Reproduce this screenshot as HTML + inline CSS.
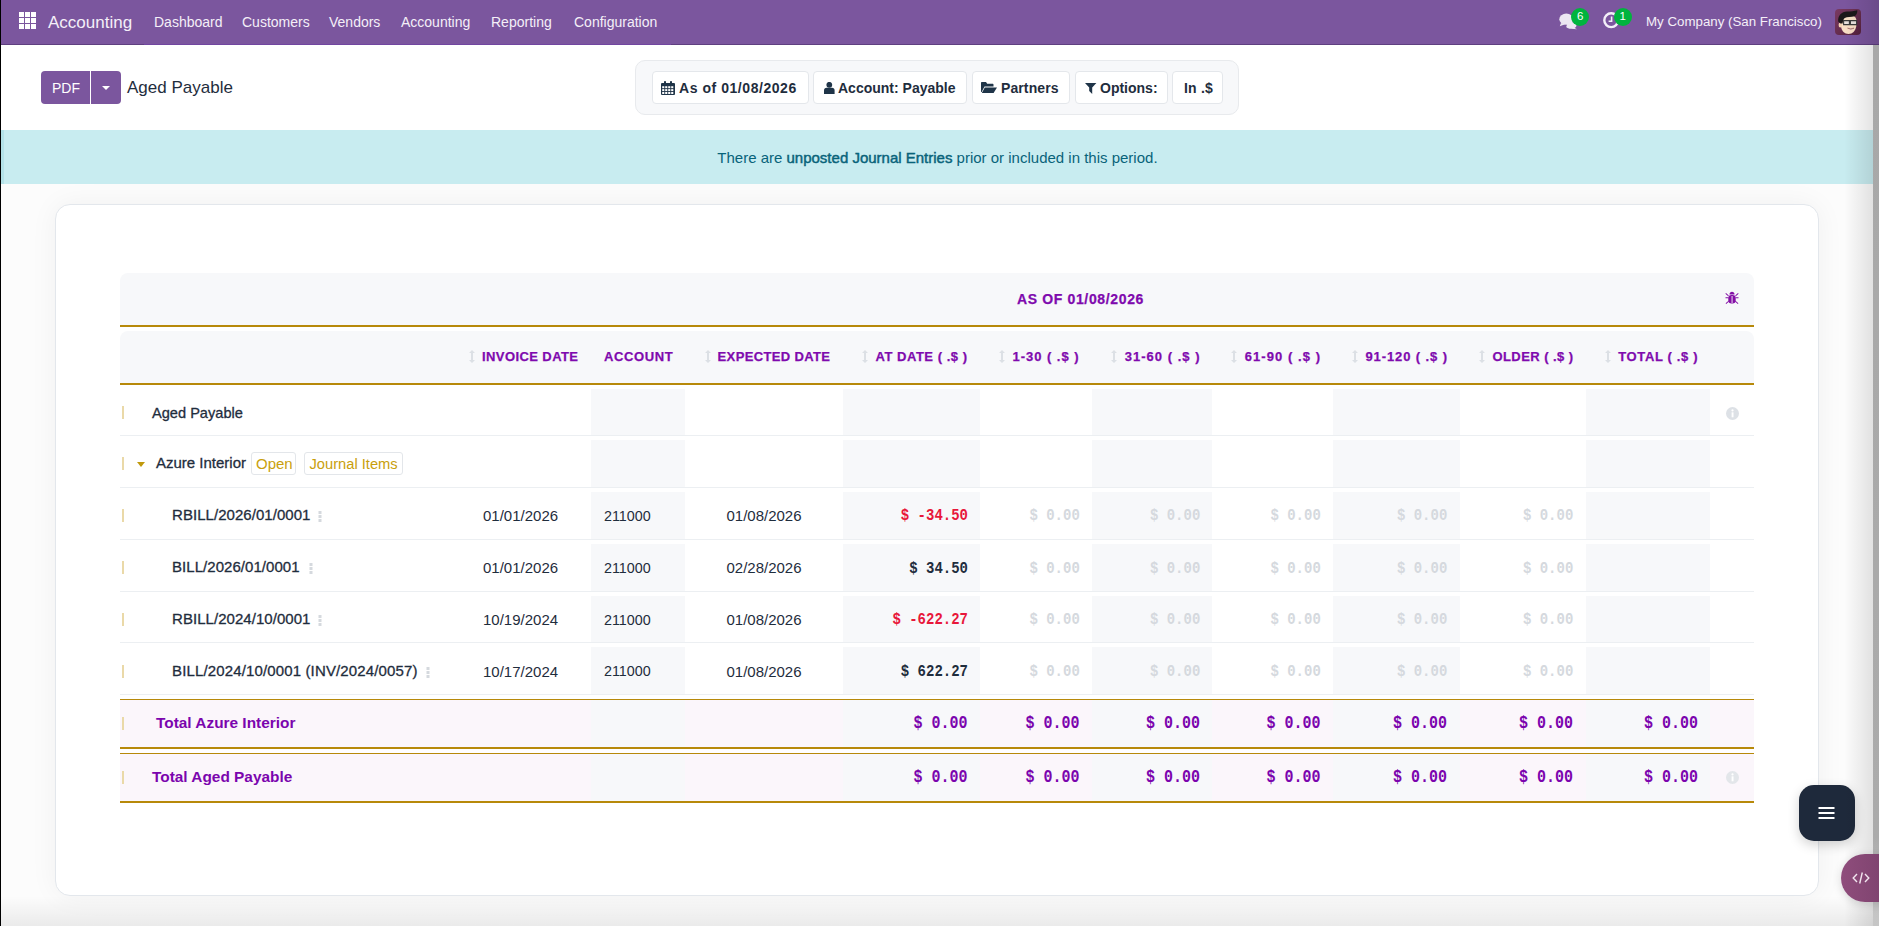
<!DOCTYPE html>
<html><head><meta charset="utf-8">
<style>
*{box-sizing:border-box}
html,body{margin:0;padding:0}
body{width:1879px;height:926px;overflow:hidden;position:relative;background:#fff;font-family:"Liberation Sans",sans-serif;color:#1f2d3d}
.a{position:absolute}
.t{position:absolute;white-space:nowrap;line-height:1}
</style></head><body>

<div class="a" style="left:0px;top:0px;width:1879px;height:45px;background:#7b569e;"></div>
<div class="a" style="left:0px;top:44px;width:1879px;height:1px;background:#5f3f80;"></div>
<div class="a" style="left:144px;top:44px;width:527px;height:1px;background:#7146a0;"></div>
<div class="a" style="left:0px;top:130px;width:1879px;height:54px;background:#c8ecf0;"></div>
<div class="a" style="left:0px;top:184px;width:1879px;height:742px;background:#fcfcfc;"></div>
<div class="a" style="left:1px;top:130px;width:3px;height:54px;background:#b4e2e8;"></div>
<svg class="a" style="left:19px;top:12px" width="18" height="18" viewBox="0 0 18 18"><g fill="#fff"><rect x="0" y="0" width="5" height="5"/><rect x="6" y="0" width="5" height="5"/><rect x="12" y="0" width="5" height="5"/><rect x="0" y="6" width="5" height="5"/><rect x="6" y="6" width="5" height="5"/><rect x="12" y="6" width="5" height="5"/><rect x="0" y="12" width="5" height="5"/><rect x="6" y="12" width="5" height="5"/><rect x="12" y="12" width="5" height="5"/></g></svg>
<div class="t" style="top:14.21px;font-size:17px;color:#f4eff8;font-weight:400;font-family:'Liberation Sans';left:48px;">Accounting</div>
<div class="t" style="top:14.85px;font-size:14px;color:#f4eff8;font-weight:400;font-family:'Liberation Sans';left:154px;">Dashboard</div>
<div class="t" style="top:14.85px;font-size:14px;color:#f4eff8;font-weight:400;font-family:'Liberation Sans';left:242px;">Customers</div>
<div class="t" style="top:14.85px;font-size:14px;color:#f4eff8;font-weight:400;font-family:'Liberation Sans';left:329px;">Vendors</div>
<div class="t" style="top:14.85px;font-size:14px;color:#f4eff8;font-weight:400;font-family:'Liberation Sans';left:401px;">Accounting</div>
<div class="t" style="top:14.85px;font-size:14px;color:#f4eff8;font-weight:400;font-family:'Liberation Sans';left:491px;">Reporting</div>
<div class="t" style="top:14.85px;font-size:14px;color:#f4eff8;font-weight:400;font-family:'Liberation Sans';left:574px;">Configuration</div>
<div class="t" style="top:15.44px;font-size:13.3px;color:#f4eff8;font-weight:400;font-family:'Liberation Sans';left:1646px;">My Company (San Francisco)</div>
<div class="a" style="left:41px;top:71px;width:49px;height:33px;background:#7b569e;border-radius:4px 0 0 4px"></div>
<div class="a" style="left:91px;top:71px;width:30px;height:33px;background:#7b569e;border-radius:0 4px 4px 0"></div>
<div class="t" style="top:80.95px;font-size:14px;color:#fff;font-weight:400;font-family:'Liberation Sans';left:52px;">PDF</div>
<div class="a" style="left:102px;top:86px;width:0;height:0;border-left:4px solid transparent;border-right:4px solid transparent;border-top:4px solid #fff"></div>
<div class="t" style="top:79.01px;font-size:17px;color:#1f2d3d;font-weight:400;font-family:'Liberation Sans';left:127px;">Aged Payable</div>
<div class="a" style="left:635px;top:60px;width:604px;height:55px;background:#f7f8fa;border:1px solid #e8eaed;border-radius:10px"></div>
<div class="a" style="left:652px;top:71px;width:157px;height:33px;background:#fff;border:1px solid #e4e7eb;border-radius:4px"></div>
<div class="a" style="left:813px;top:71px;width:154px;height:33px;background:#fff;border:1px solid #e4e7eb;border-radius:4px"></div>
<div class="a" style="left:972px;top:71px;width:98px;height:33px;background:#fff;border:1px solid #e4e7eb;border-radius:4px"></div>
<div class="a" style="left:1075px;top:71px;width:93px;height:33px;background:#fff;border:1px solid #e4e7eb;border-radius:4px"></div>
<div class="a" style="left:1172px;top:71px;width:51px;height:33px;background:#fff;border:1px solid #e4e7eb;border-radius:4px"></div>
<div class="t" style="top:80.95px;font-size:14px;color:#1f2d3d;font-weight:700;font-family:'Liberation Sans';letter-spacing:0.55px;left:679px;">As of 01/08/2026</div>
<div class="t" style="top:80.95px;font-size:14px;color:#1f2d3d;font-weight:700;font-family:'Liberation Sans';left:838px;">Account: Payable</div>
<div class="t" style="top:80.95px;font-size:14px;color:#1f2d3d;font-weight:700;font-family:'Liberation Sans';letter-spacing:0.1px;left:1001px;">Partners</div>
<div class="t" style="top:80.95px;font-size:14px;color:#1f2d3d;font-weight:700;font-family:'Liberation Sans';left:1100px;">Options:</div>
<div class="t" style="top:80.95px;font-size:14px;color:#1f2d3d;font-weight:700;font-family:'Liberation Sans';letter-spacing:0.2px;left:1184px;">In .$</div>
<div class="t" style="top:149.80px;font-size:15px;color:#08637a;font-weight:400;font-family:'Liberation Sans';left:717.3px;">There are <span style="-webkit-text-stroke:0.45px #08637a">unposted Journal Entries</span> prior or included in this period.</div>
<div class="a" style="left:55px;top:204px;width:1764px;height:692px;background:#fff;border:1px solid #e3e7ec;border-radius:15px;box-shadow:0 0 28px rgba(0,0,0,0.05)"></div>
<div class="a" style="left:120px;top:273px;width:1634px;height:52px;background:#f7f8fa;border-radius:8px 8px 0 0"></div>
<div class="a" style="left:120px;top:325px;width:1634px;height:2px;background:#b7890a;"></div>
<div class="t" style="top:291.95px;font-size:14px;color:#7f0aae;font-weight:700;font-family:'Liberation Sans';letter-spacing:0.64px;left:1017px;-webkit-text-stroke:0.25px #7f0aae">AS OF 01/08/2026</div>
<div class="a" style="left:120px;top:331px;width:1634px;height:52px;background:#f7f8fa;border-radius:8px 8px 0 0"></div>
<div class="a" style="left:120px;top:383px;width:1634px;height:2px;background:#b7890a;"></div>
<div class="t" style="top:350.29px;font-size:13px;color:#7f0aae;font-weight:700;font-family:'Liberation Sans';letter-spacing:0.41px;right:1300.59px;-webkit-text-stroke:0.25px #7f0aae;">INVOICE DATE</div>
<svg class="a" style="left:469px;top:350px" width="6" height="13" viewBox="0 0 6 13"><path d="M3 0 L6 3 H4 V10 H6 L3 13 L0 10 H2 V3 H0 Z" fill="#dce0e5"/></svg>
<div class="t" style="top:350.29px;font-size:13px;color:#7f0aae;font-weight:700;font-family:'Liberation Sans';letter-spacing:0.62px;left:604px;-webkit-text-stroke:0.25px #7f0aae;">ACCOUNT</div>
<div class="t" style="top:350.29px;font-size:13px;color:#7f0aae;font-weight:700;font-family:'Liberation Sans';letter-spacing:0.36px;right:1048.64px;-webkit-text-stroke:0.25px #7f0aae;">EXPECTED DATE</div>
<svg class="a" style="left:705px;top:350px" width="6" height="13" viewBox="0 0 6 13"><path d="M3 0 L6 3 H4 V10 H6 L3 13 L0 10 H2 V3 H0 Z" fill="#dce0e5"/></svg>
<div class="t" style="top:350.29px;font-size:13px;color:#7f0aae;font-weight:700;font-family:'Liberation Sans';letter-spacing:0.52px;right:911.48px;-webkit-text-stroke:0.25px #7f0aae;">AT DATE ( .$ )</div>
<svg class="a" style="left:862px;top:350px" width="6" height="13" viewBox="0 0 6 13"><path d="M3 0 L6 3 H4 V10 H6 L3 13 L0 10 H2 V3 H0 Z" fill="#dce0e5"/></svg>
<div class="t" style="top:350.29px;font-size:13px;color:#7f0aae;font-weight:700;font-family:'Liberation Sans';letter-spacing:0.96px;right:799.54px;-webkit-text-stroke:0.25px #7f0aae;">1-30 ( .$ )</div>
<svg class="a" style="left:999px;top:350px" width="6" height="13" viewBox="0 0 6 13"><path d="M3 0 L6 3 H4 V10 H6 L3 13 L0 10 H2 V3 H0 Z" fill="#dce0e5"/></svg>
<div class="t" style="top:350.29px;font-size:13px;color:#7f0aae;font-weight:700;font-family:'Liberation Sans';letter-spacing:1.02px;right:678.48px;-webkit-text-stroke:0.25px #7f0aae;">31-60 ( .$ )</div>
<svg class="a" style="left:1111px;top:350px" width="6" height="13" viewBox="0 0 6 13"><path d="M3 0 L6 3 H4 V10 H6 L3 13 L0 10 H2 V3 H0 Z" fill="#dce0e5"/></svg>
<div class="t" style="top:350.29px;font-size:13px;color:#7f0aae;font-weight:700;font-family:'Liberation Sans';letter-spacing:1.06px;right:557.94px;-webkit-text-stroke:0.25px #7f0aae;">61-90 ( .$ )</div>
<svg class="a" style="left:1231px;top:350px" width="6" height="13" viewBox="0 0 6 13"><path d="M3 0 L6 3 H4 V10 H6 L3 13 L0 10 H2 V3 H0 Z" fill="#dce0e5"/></svg>
<div class="t" style="top:350.29px;font-size:13px;color:#7f0aae;font-weight:700;font-family:'Liberation Sans';letter-spacing:0.9px;right:431.1px;-webkit-text-stroke:0.25px #7f0aae;">91-120 ( .$ )</div>
<svg class="a" style="left:1352px;top:350px" width="6" height="13" viewBox="0 0 6 13"><path d="M3 0 L6 3 H4 V10 H6 L3 13 L0 10 H2 V3 H0 Z" fill="#dce0e5"/></svg>
<div class="t" style="top:350.29px;font-size:13px;color:#7f0aae;font-weight:700;font-family:'Liberation Sans';letter-spacing:0.43px;right:305.57px;-webkit-text-stroke:0.25px #7f0aae;">OLDER ( .$ )</div>
<svg class="a" style="left:1479px;top:350px" width="6" height="13" viewBox="0 0 6 13"><path d="M3 0 L6 3 H4 V10 H6 L3 13 L0 10 H2 V3 H0 Z" fill="#dce0e5"/></svg>
<div class="t" style="top:350.29px;font-size:13px;color:#7f0aae;font-weight:700;font-family:'Liberation Sans';letter-spacing:0.64px;right:180.86px;-webkit-text-stroke:0.25px #7f0aae;">TOTAL ( .$ )</div>
<svg class="a" style="left:1605px;top:350px" width="6" height="13" viewBox="0 0 6 13"><path d="M3 0 L6 3 H4 V10 H6 L3 13 L0 10 H2 V3 H0 Z" fill="#dce0e5"/></svg>
<div class="a" style="left:591px;top:389px;width:94px;height:46px;background:#f7f8fa;"></div>
<div class="a" style="left:843px;top:389px;width:137px;height:46px;background:#f7f8fa;"></div>
<div class="a" style="left:1092px;top:389px;width:120px;height:46px;background:#f7f8fa;"></div>
<div class="a" style="left:1333px;top:389px;width:127px;height:46px;background:#f7f8fa;"></div>
<div class="a" style="left:1586px;top:389px;width:124px;height:46px;background:#f7f8fa;"></div>
<div class="a" style="left:120px;top:435px;width:1634px;height:1px;background:#eceff2;"></div>
<div class="a" style="left:591px;top:440px;width:94px;height:47px;background:#f7f8fa;"></div>
<div class="a" style="left:843px;top:440px;width:137px;height:47px;background:#f7f8fa;"></div>
<div class="a" style="left:1092px;top:440px;width:120px;height:47px;background:#f7f8fa;"></div>
<div class="a" style="left:1333px;top:440px;width:127px;height:47px;background:#f7f8fa;"></div>
<div class="a" style="left:1586px;top:440px;width:124px;height:47px;background:#f7f8fa;"></div>
<div class="a" style="left:120px;top:487px;width:1634px;height:1px;background:#eceff2;"></div>
<div class="a" style="left:591px;top:492px;width:94px;height:47px;background:#f7f8fa;"></div>
<div class="a" style="left:843px;top:492px;width:137px;height:47px;background:#f7f8fa;"></div>
<div class="a" style="left:1092px;top:492px;width:120px;height:47px;background:#f7f8fa;"></div>
<div class="a" style="left:1333px;top:492px;width:127px;height:47px;background:#f7f8fa;"></div>
<div class="a" style="left:1586px;top:492px;width:124px;height:47px;background:#f7f8fa;"></div>
<div class="a" style="left:120px;top:539px;width:1634px;height:1px;background:#eceff2;"></div>
<div class="a" style="left:591px;top:544px;width:94px;height:47px;background:#f7f8fa;"></div>
<div class="a" style="left:843px;top:544px;width:137px;height:47px;background:#f7f8fa;"></div>
<div class="a" style="left:1092px;top:544px;width:120px;height:47px;background:#f7f8fa;"></div>
<div class="a" style="left:1333px;top:544px;width:127px;height:47px;background:#f7f8fa;"></div>
<div class="a" style="left:1586px;top:544px;width:124px;height:47px;background:#f7f8fa;"></div>
<div class="a" style="left:120px;top:591px;width:1634px;height:1px;background:#eceff2;"></div>
<div class="a" style="left:591px;top:596px;width:94px;height:46px;background:#f7f8fa;"></div>
<div class="a" style="left:843px;top:596px;width:137px;height:46px;background:#f7f8fa;"></div>
<div class="a" style="left:1092px;top:596px;width:120px;height:46px;background:#f7f8fa;"></div>
<div class="a" style="left:1333px;top:596px;width:127px;height:46px;background:#f7f8fa;"></div>
<div class="a" style="left:1586px;top:596px;width:124px;height:46px;background:#f7f8fa;"></div>
<div class="a" style="left:120px;top:642px;width:1634px;height:1px;background:#eceff2;"></div>
<div class="a" style="left:591px;top:647px;width:94px;height:47px;background:#f7f8fa;"></div>
<div class="a" style="left:843px;top:647px;width:137px;height:47px;background:#f7f8fa;"></div>
<div class="a" style="left:1092px;top:647px;width:120px;height:47px;background:#f7f8fa;"></div>
<div class="a" style="left:1333px;top:647px;width:127px;height:47px;background:#f7f8fa;"></div>
<div class="a" style="left:1586px;top:647px;width:124px;height:47px;background:#f7f8fa;"></div>
<div class="a" style="left:120px;top:694px;width:1634px;height:1px;background:#eceff2;"></div>
<div class="a" style="left:122px;top:406px;width:2px;height:13px;background:#ead9a8;"></div>
<div class="t" style="top:405.84px;font-size:14.6px;color:#1f2d3d;font-weight:500;font-family:'Liberation Sans';left:152px;-webkit-text-stroke:0.3px #1f2d3d;">Aged Payable</div>
<svg class="a" style="left:1726px;top:407px" width="13" height="13" viewBox="0 0 13 13"><circle cx="6.5" cy="6.5" r="6.5" fill="#dde1e6"/><rect x="5.6" y="5.3" width="1.9" height="5" fill="#fff"/><circle cx="6.5" cy="3.4" r="1.1" fill="#fff"/></svg>
<div class="a" style="left:122px;top:457px;width:2px;height:13px;background:#ead9a8;"></div>
<div class="a" style="left:137px;top:462px;width:0;height:0;border-left:4.5px solid transparent;border-right:4.5px solid transparent;border-top:5px solid #c0990c"></div>
<div class="t" style="top:455.40px;font-size:15px;color:#1f2d3d;font-weight:500;font-family:'Liberation Sans';left:156px;-webkit-text-stroke:0.3px #1f2d3d;">Azure Interior</div>
<div class="a" style="left:251px;top:452px;width:45px;height:23px;border:1px solid #e3e6ea;border-radius:3px;background:#fff"></div>
<div class="t" style="top:456.30px;font-size:15px;color:#c9a00c;font-weight:400;font-family:'Liberation Sans';left:256px;">Open</div>
<div class="a" style="left:304px;top:452px;width:99px;height:23px;border:1px solid #e3e6ea;border-radius:3px;background:#fff"></div>
<div class="t" style="top:456.55px;font-size:14.7px;color:#c9a00c;font-weight:400;font-family:'Liberation Sans';left:309.5px;">Journal Items</div>
<div class="a" style="left:122px;top:509.20000000000005px;width:2px;height:13.0px;background:#ead9a8;"></div>
<div class="t" style="top:507.10px;font-size:15px;color:#1f2d3d;font-weight:500;font-family:'Liberation Sans';letter-spacing:0.05px;left:172px;-webkit-text-stroke:0.3px #1f2d3d;">RBILL/2026/01/0001</div>
<svg class="a" style="left:318px;top:511.20000000000005px" width="4" height="11" viewBox="0 0 4 11"><g fill="#d5d9de"><rect x="0.5" y="0" width="3" height="3"/><rect x="0.5" y="4" width="3" height="3"/><rect x="0.5" y="8" width="3" height="3"/></g></svg>
<div class="t" style="top:508.00px;font-size:15px;color:#1f2d3d;font-weight:400;font-family:'Liberation Sans';left:483px;">01/01/2026</div>
<div class="t" style="top:508.59px;font-size:14.3px;color:#1f2d3d;font-weight:400;font-family:'Liberation Sans';left:604px;">211000</div>
<div class="t" style="top:508.00px;font-size:15px;color:#1f2d3d;font-weight:400;font-family:'Liberation Sans';left:764px;transform:translateX(-50%);">01/08/2026</div>
<div class="t" style="top:509.47px;font-size:14px;color:#e8173a;font-weight:700;font-family:'Liberation Mono';right:911px;transform:scaleY(1.12);transform-origin:0 76.6%;">$ -34.50</div>
<div class="t" style="top:509.47px;font-size:14px;color:#d5d9de;font-weight:700;font-family:'Liberation Mono';right:799.2px;transform:scaleY(1.12);transform-origin:0 76.6%;">$ 0.00</div>
<div class="t" style="top:509.47px;font-size:14px;color:#d5d9de;font-weight:700;font-family:'Liberation Mono';right:678.7px;transform:scaleY(1.12);transform-origin:0 76.6%;">$ 0.00</div>
<div class="t" style="top:509.47px;font-size:14px;color:#d5d9de;font-weight:700;font-family:'Liberation Mono';right:558.2px;transform:scaleY(1.12);transform-origin:0 76.6%;">$ 0.00</div>
<div class="t" style="top:509.47px;font-size:14px;color:#d5d9de;font-weight:700;font-family:'Liberation Mono';right:431.70000000000005px;transform:scaleY(1.12);transform-origin:0 76.6%;">$ 0.00</div>
<div class="t" style="top:509.47px;font-size:14px;color:#d5d9de;font-weight:700;font-family:'Liberation Mono';right:305.70000000000005px;transform:scaleY(1.12);transform-origin:0 76.6%;">$ 0.00</div>
<div class="a" style="left:122px;top:561.4px;width:2px;height:13.0px;background:#ead9a8;"></div>
<div class="t" style="top:559.30px;font-size:15px;color:#1f2d3d;font-weight:500;font-family:'Liberation Sans';letter-spacing:0.05px;left:172px;-webkit-text-stroke:0.3px #1f2d3d;">BILL/2026/01/0001</div>
<svg class="a" style="left:309px;top:563.4px" width="4" height="11" viewBox="0 0 4 11"><g fill="#d5d9de"><rect x="0.5" y="0" width="3" height="3"/><rect x="0.5" y="4" width="3" height="3"/><rect x="0.5" y="8" width="3" height="3"/></g></svg>
<div class="t" style="top:560.20px;font-size:15px;color:#1f2d3d;font-weight:400;font-family:'Liberation Sans';left:483px;">01/01/2026</div>
<div class="t" style="top:560.79px;font-size:14.3px;color:#1f2d3d;font-weight:400;font-family:'Liberation Sans';left:604px;">211000</div>
<div class="t" style="top:560.20px;font-size:15px;color:#1f2d3d;font-weight:400;font-family:'Liberation Sans';left:764px;transform:translateX(-50%);">02/28/2026</div>
<div class="t" style="top:561.67px;font-size:14px;color:#1f2d3d;font-weight:700;font-family:'Liberation Mono';right:911px;transform:scaleY(1.12);transform-origin:0 76.6%;">$ 34.50</div>
<div class="t" style="top:561.67px;font-size:14px;color:#d5d9de;font-weight:700;font-family:'Liberation Mono';right:799.2px;transform:scaleY(1.12);transform-origin:0 76.6%;">$ 0.00</div>
<div class="t" style="top:561.67px;font-size:14px;color:#d5d9de;font-weight:700;font-family:'Liberation Mono';right:678.7px;transform:scaleY(1.12);transform-origin:0 76.6%;">$ 0.00</div>
<div class="t" style="top:561.67px;font-size:14px;color:#d5d9de;font-weight:700;font-family:'Liberation Mono';right:558.2px;transform:scaleY(1.12);transform-origin:0 76.6%;">$ 0.00</div>
<div class="t" style="top:561.67px;font-size:14px;color:#d5d9de;font-weight:700;font-family:'Liberation Mono';right:431.70000000000005px;transform:scaleY(1.12);transform-origin:0 76.6%;">$ 0.00</div>
<div class="t" style="top:561.67px;font-size:14px;color:#d5d9de;font-weight:700;font-family:'Liberation Mono';right:305.70000000000005px;transform:scaleY(1.12);transform-origin:0 76.6%;">$ 0.00</div>
<div class="a" style="left:122px;top:613.2px;width:2px;height:13.0px;background:#ead9a8;"></div>
<div class="t" style="top:611.10px;font-size:15px;color:#1f2d3d;font-weight:500;font-family:'Liberation Sans';letter-spacing:0.05px;left:172px;-webkit-text-stroke:0.3px #1f2d3d;">RBILL/2024/10/0001</div>
<svg class="a" style="left:318px;top:615.2px" width="4" height="11" viewBox="0 0 4 11"><g fill="#d5d9de"><rect x="0.5" y="0" width="3" height="3"/><rect x="0.5" y="4" width="3" height="3"/><rect x="0.5" y="8" width="3" height="3"/></g></svg>
<div class="t" style="top:612.00px;font-size:15px;color:#1f2d3d;font-weight:400;font-family:'Liberation Sans';left:483px;">10/19/2024</div>
<div class="t" style="top:612.59px;font-size:14.3px;color:#1f2d3d;font-weight:400;font-family:'Liberation Sans';left:604px;">211000</div>
<div class="t" style="top:612.00px;font-size:15px;color:#1f2d3d;font-weight:400;font-family:'Liberation Sans';left:764px;transform:translateX(-50%);">01/08/2026</div>
<div class="t" style="top:613.47px;font-size:14px;color:#e8173a;font-weight:700;font-family:'Liberation Mono';right:911px;transform:scaleY(1.12);transform-origin:0 76.6%;">$ -622.27</div>
<div class="t" style="top:613.47px;font-size:14px;color:#d5d9de;font-weight:700;font-family:'Liberation Mono';right:799.2px;transform:scaleY(1.12);transform-origin:0 76.6%;">$ 0.00</div>
<div class="t" style="top:613.47px;font-size:14px;color:#d5d9de;font-weight:700;font-family:'Liberation Mono';right:678.7px;transform:scaleY(1.12);transform-origin:0 76.6%;">$ 0.00</div>
<div class="t" style="top:613.47px;font-size:14px;color:#d5d9de;font-weight:700;font-family:'Liberation Mono';right:558.2px;transform:scaleY(1.12);transform-origin:0 76.6%;">$ 0.00</div>
<div class="t" style="top:613.47px;font-size:14px;color:#d5d9de;font-weight:700;font-family:'Liberation Mono';right:431.70000000000005px;transform:scaleY(1.12);transform-origin:0 76.6%;">$ 0.00</div>
<div class="t" style="top:613.47px;font-size:14px;color:#d5d9de;font-weight:700;font-family:'Liberation Mono';right:305.70000000000005px;transform:scaleY(1.12);transform-origin:0 76.6%;">$ 0.00</div>
<div class="a" style="left:122px;top:664.9px;width:2px;height:13.0px;background:#ead9a8;"></div>
<div class="t" style="top:662.80px;font-size:15px;color:#1f2d3d;font-weight:500;font-family:'Liberation Sans';letter-spacing:0.14px;left:172px;-webkit-text-stroke:0.3px #1f2d3d;">BILL/2024/10/0001 (INV/2024/0057)</div>
<svg class="a" style="left:426px;top:666.9px" width="4" height="11" viewBox="0 0 4 11"><g fill="#d5d9de"><rect x="0.5" y="0" width="3" height="3"/><rect x="0.5" y="4" width="3" height="3"/><rect x="0.5" y="8" width="3" height="3"/></g></svg>
<div class="t" style="top:663.70px;font-size:15px;color:#1f2d3d;font-weight:400;font-family:'Liberation Sans';left:483px;">10/17/2024</div>
<div class="t" style="top:664.29px;font-size:14.3px;color:#1f2d3d;font-weight:400;font-family:'Liberation Sans';left:604px;">211000</div>
<div class="t" style="top:663.70px;font-size:15px;color:#1f2d3d;font-weight:400;font-family:'Liberation Sans';left:764px;transform:translateX(-50%);">01/08/2026</div>
<div class="t" style="top:665.17px;font-size:14px;color:#1f2d3d;font-weight:700;font-family:'Liberation Mono';right:911px;transform:scaleY(1.12);transform-origin:0 76.6%;">$ 622.27</div>
<div class="t" style="top:665.17px;font-size:14px;color:#d5d9de;font-weight:700;font-family:'Liberation Mono';right:799.2px;transform:scaleY(1.12);transform-origin:0 76.6%;">$ 0.00</div>
<div class="t" style="top:665.17px;font-size:14px;color:#d5d9de;font-weight:700;font-family:'Liberation Mono';right:678.7px;transform:scaleY(1.12);transform-origin:0 76.6%;">$ 0.00</div>
<div class="t" style="top:665.17px;font-size:14px;color:#d5d9de;font-weight:700;font-family:'Liberation Mono';right:558.2px;transform:scaleY(1.12);transform-origin:0 76.6%;">$ 0.00</div>
<div class="t" style="top:665.17px;font-size:14px;color:#d5d9de;font-weight:700;font-family:'Liberation Mono';right:431.70000000000005px;transform:scaleY(1.12);transform-origin:0 76.6%;">$ 0.00</div>
<div class="t" style="top:665.17px;font-size:14px;color:#d5d9de;font-weight:700;font-family:'Liberation Mono';right:305.70000000000005px;transform:scaleY(1.12);transform-origin:0 76.6%;">$ 0.00</div>
<div class="a" style="left:120px;top:699px;width:1634px;height:1px;background:#b7890a;"></div>
<div class="a" style="left:120px;top:700px;width:1634px;height:47px;background:#fbf6fb;"></div>
<div class="a" style="left:591px;top:700px;width:94px;height:47px;background:#f7f8fa;"></div>
<div class="a" style="left:843px;top:700px;width:137px;height:47px;background:#f7f8fa;"></div>
<div class="a" style="left:1092px;top:700px;width:120px;height:47px;background:#f7f8fa;"></div>
<div class="a" style="left:1333px;top:700px;width:127px;height:47px;background:#f7f8fa;"></div>
<div class="a" style="left:1586px;top:700px;width:124px;height:47px;background:#f7f8fa;"></div>
<div class="a" style="left:120px;top:747px;width:1634px;height:2px;background:#b7890a;"></div>
<div class="a" style="left:120px;top:753px;width:1634px;height:1px;background:#b7890a;"></div>
<div class="a" style="left:120px;top:754px;width:1634px;height:47px;background:#fbf6fb;"></div>
<div class="a" style="left:591px;top:754px;width:94px;height:47px;background:#f7f8fa;"></div>
<div class="a" style="left:843px;top:754px;width:137px;height:47px;background:#f7f8fa;"></div>
<div class="a" style="left:1092px;top:754px;width:120px;height:47px;background:#f7f8fa;"></div>
<div class="a" style="left:1333px;top:754px;width:127px;height:47px;background:#f7f8fa;"></div>
<div class="a" style="left:1586px;top:754px;width:124px;height:47px;background:#f7f8fa;"></div>
<div class="a" style="left:120px;top:801px;width:1634px;height:2px;background:#b7890a;"></div>
<div class="a" style="left:122px;top:717px;width:2px;height:13px;background:#ead9a8;"></div>
<div class="t" style="top:715.26px;font-size:15.4px;color:#7b05ae;font-weight:700;font-family:'Liberation Sans';left:156px;">Total Azure Interior</div>
<div class="a" style="left:122px;top:771px;width:2px;height:13px;background:#ead9a8;"></div>
<div class="t" style="top:769.26px;font-size:15.4px;color:#7b05ae;font-weight:700;font-family:'Liberation Sans';left:152px;">Total Aged Payable</div>
<div class="t" style="top:716.51px;font-size:15px;color:#7b05ae;font-weight:700;font-family:'Liberation Mono';right:911.5px;transform:scaleY(1.2);transform-origin:0 76.6%;">$ 0.00</div>
<div class="t" style="top:716.51px;font-size:15px;color:#7b05ae;font-weight:700;font-family:'Liberation Mono';right:799.5px;transform:scaleY(1.2);transform-origin:0 76.6%;">$ 0.00</div>
<div class="t" style="top:716.51px;font-size:15px;color:#7b05ae;font-weight:700;font-family:'Liberation Mono';right:679px;transform:scaleY(1.2);transform-origin:0 76.6%;">$ 0.00</div>
<div class="t" style="top:716.51px;font-size:15px;color:#7b05ae;font-weight:700;font-family:'Liberation Mono';right:558.5px;transform:scaleY(1.2);transform-origin:0 76.6%;">$ 0.00</div>
<div class="t" style="top:716.51px;font-size:15px;color:#7b05ae;font-weight:700;font-family:'Liberation Mono';right:432px;transform:scaleY(1.2);transform-origin:0 76.6%;">$ 0.00</div>
<div class="t" style="top:716.51px;font-size:15px;color:#7b05ae;font-weight:700;font-family:'Liberation Mono';right:306px;transform:scaleY(1.2);transform-origin:0 76.6%;">$ 0.00</div>
<div class="t" style="top:716.51px;font-size:15px;color:#7b05ae;font-weight:700;font-family:'Liberation Mono';right:181px;transform:scaleY(1.2);transform-origin:0 76.6%;">$ 0.00</div>
<div class="t" style="top:771.01px;font-size:15px;color:#7b05ae;font-weight:700;font-family:'Liberation Mono';right:911.5px;transform:scaleY(1.2);transform-origin:0 76.6%;">$ 0.00</div>
<div class="t" style="top:771.01px;font-size:15px;color:#7b05ae;font-weight:700;font-family:'Liberation Mono';right:799.5px;transform:scaleY(1.2);transform-origin:0 76.6%;">$ 0.00</div>
<div class="t" style="top:771.01px;font-size:15px;color:#7b05ae;font-weight:700;font-family:'Liberation Mono';right:679px;transform:scaleY(1.2);transform-origin:0 76.6%;">$ 0.00</div>
<div class="t" style="top:771.01px;font-size:15px;color:#7b05ae;font-weight:700;font-family:'Liberation Mono';right:558.5px;transform:scaleY(1.2);transform-origin:0 76.6%;">$ 0.00</div>
<div class="t" style="top:771.01px;font-size:15px;color:#7b05ae;font-weight:700;font-family:'Liberation Mono';right:432px;transform:scaleY(1.2);transform-origin:0 76.6%;">$ 0.00</div>
<div class="t" style="top:771.01px;font-size:15px;color:#7b05ae;font-weight:700;font-family:'Liberation Mono';right:306px;transform:scaleY(1.2);transform-origin:0 76.6%;">$ 0.00</div>
<div class="t" style="top:771.01px;font-size:15px;color:#7b05ae;font-weight:700;font-family:'Liberation Mono';right:181px;transform:scaleY(1.2);transform-origin:0 76.6%;">$ 0.00</div>
<svg class="a" style="left:1726px;top:771px" width="13" height="13" viewBox="0 0 13 13"><circle cx="6.5" cy="6.5" r="6.5" fill="#e3e6ea"/><rect x="5.6" y="5.3" width="1.9" height="5" fill="#fff"/><circle cx="6.5" cy="3.4" r="1.1" fill="#fff"/></svg>
<svg class="a" style="left:1558px;top:12px" width="21" height="18" viewBox="0 0 21 18"><path d="M10 9.5 C14.5 9.5 18.5 11.2 18.5 13.5 C18.5 14.6 17.6 15.5 16.6 16 L19 17.2 L13 16.8 C11 16.8 9 16 8.2 15" fill="#ece6f2"/><ellipse cx="8.3" cy="7.2" rx="7" ry="5.6" fill="#ece6f2"/><path d="M3 11 L1.8 14.2 L7 12.3 Z" fill="#ece6f2"/></svg>
<div class="a" style="left:1571px;top:8px;width:18px;height:18px;border-radius:50%;background:#00b43e"></div>
<div class="t" style="top:10.56px;font-size:11.5px;color:#fff;font-weight:400;font-family:'Liberation Sans';left:1580.3px;transform:translateX(-50%);">6</div>
<svg class="a" style="left:1603px;top:12px" width="17" height="17" viewBox="0 0 17 17"><circle cx="8.2" cy="8.2" r="6.9" fill="none" stroke="#f4eff8" stroke-width="2.4"/><path d="M8.6 4.5 V9.3 H5.6" fill="none" stroke="#f4eff8" stroke-width="1.6"/></svg>
<div class="a" style="left:1614px;top:8px;width:18px;height:18px;border-radius:50%;background:#00b43e"></div>
<div class="t" style="top:10.56px;font-size:11.5px;color:#fff;font-weight:400;font-family:'Liberation Sans';left:1622.7px;transform:translateX(-50%);">1</div>
<svg class="a" style="left:1835px;top:9px" width="26" height="26" viewBox="0 0 26 26"><defs><linearGradient id="avg" x1="0" y1="0" x2="1" y2="1"><stop offset="0" stop-color="#7a3a62"/><stop offset="1" stop-color="#55213d"/></linearGradient></defs><rect width="26" height="26" rx="4" fill="url(#avg)"/><path d="M5.5 12 C5.5 7.5 8.5 6 13.5 6 C18.5 6 21.5 7.5 21.5 12.5 L21.2 17.5 C20.5 22 17.5 25 13.5 25 C9.5 25 6.5 22 6 17.5 Z" fill="#f9dfc6"/><ellipse cx="5.3" cy="16" rx="1.7" ry="2.6" fill="#f3d2b3"/><path d="M3.2 12.5 C2.8 6.5 6.5 2.8 12 2.6 C16 2.4 19 2.2 22.3 1.2 C22.6 3.5 21.5 6.2 19.5 7.2 C16.5 8.2 12 7.5 9.8 9 C8.6 9.8 8 11.5 7.6 14.5 L5.5 14.6 Z" fill="#1c181a"/><path d="M8.6 11.6 H14.4 V15.6 H8.6 Z M15.4 11.6 H21.6 V15.6 H15.4 Z" fill="#e8e2de" stroke="#3a3a3a" stroke-width="1.1"/><rect x="14.2" y="12.4" width="1.4" height="0.9" fill="#3a3a3a"/><path d="M12.6 19.2 Q15.8 21.6 19 19.2 Q15.8 20.2 12.6 19.2 Z" fill="#fff" stroke="#9a6060" stroke-width="0.6"/></svg>
<svg class="a" style="left:661px;top:81px" width="14" height="14" viewBox="0 0 14 14"><rect x="0" y="2" width="14" height="12" rx="1" fill="#1f3448"/><rect x="3" y="0" width="2" height="4" rx="0.8" fill="#1f3448"/><rect x="9" y="0" width="2" height="4" rx="0.8" fill="#1f3448"/><rect x="1.2" y="5.2" width="2.1" height="2.0" fill="#fff"/><rect x="4.2" y="5.2" width="2.1" height="2.0" fill="#fff"/><rect x="7.2" y="5.2" width="2.1" height="2.0" fill="#fff"/><rect x="10.2" y="5.2" width="2.1" height="2.0" fill="#fff"/><rect x="1.2" y="8.1" width="2.1" height="2.0" fill="#fff"/><rect x="4.2" y="8.1" width="2.1" height="2.0" fill="#fff"/><rect x="7.2" y="8.1" width="2.1" height="2.0" fill="#fff"/><rect x="10.2" y="8.1" width="2.1" height="2.0" fill="#fff"/><rect x="1.2" y="11.0" width="2.1" height="2.0" fill="#fff"/><rect x="4.2" y="11.0" width="2.1" height="2.0" fill="#fff"/><rect x="7.2" y="11.0" width="2.1" height="2.0" fill="#fff"/><rect x="10.2" y="11.0" width="2.1" height="2.0" fill="#fff"/></svg>
<svg class="a" style="left:824px;top:82px" width="11" height="12" viewBox="0 0 11 12"><circle cx="5.3" cy="2.8" r="2.9" fill="#1f3448"/><path d="M0 12 V8.5 C0 6.8 1 5.8 2.6 5.8 H8 C9.6 5.8 10.6 6.8 10.6 8.5 V12 Z" fill="#1f3448"/></svg>
<svg class="a" style="left:981px;top:82px" width="16" height="11" viewBox="0 0 16 11"><path d="M0 1 C0 0.4 0.4 0 1 0 H5 L6.2 1.8 H11.5 C12.1 1.8 12.5 2.2 12.5 2.8 V4.5 H3.5 L0.6 10 H0 Z" fill="#1f3448"/><path d="M3.8 5.6 H16 L12.6 11 H0.8 Z" fill="#1f3448"/></svg>
<svg class="a" style="left:1085px;top:83px" width="12" height="11" viewBox="0 0 12 11"><path d="M0 0 H11.4 L7.2 4.6 V11 L4.2 8 V4.6 Z" fill="#1f3448"/></svg>
<svg class="a" style="left:1725px;top:291px" width="14" height="14" viewBox="0 0 14 14"><g fill="#8410a6"><path d="M4.5 3.5 C4.5 1.8 5.6 0.8 7 0.8 C8.4 0.8 9.5 1.8 9.5 3.5 Z"/><rect x="3.3" y="4" width="7.4" height="8.5" rx="3.2"/><path d="M0.5 6.2 H3.5 V7.2 H0.5 Z M10.5 6.2 H13.5 V7.2 H10.5 Z M1 2 L3.8 4.5 L3.2 5.2 L0.4 2.7 Z M13 2 L10.2 4.5 L10.8 5.2 L13.6 2.7 Z M0.6 12.3 L3.5 9.8 L4 10.5 L1.2 13 Z M13.4 12.3 L10.5 9.8 L10 10.5 L12.8 13 Z"/></g><rect x="6.6" y="5" width="0.9" height="7" fill="#f7f8fa"/></svg>
<div class="a" style="left:1799px;top:785px;width:56px;height:56px;border-radius:15px;background:#1e293b;box-shadow:0 4px 12px rgba(0,0,0,0.18)"></div>
<svg class="a" style="left:1818px;top:806px" width="18" height="14" viewBox="0 0 18 14"><g fill="#fff"><rect x="0.5" y="1" width="16" height="2"/><rect x="0.5" y="6" width="16" height="2"/><rect x="0.5" y="11" width="16" height="2"/></g></svg>
<div class="a" style="left:1841px;top:854px;width:80px;height:48px;border-radius:24px;background:linear-gradient(90deg,#8f4d7c,#6f3a63);box-shadow:0 2px 10px rgba(0,0,0,0.15);z-index:45"></div>
<svg class="a" style="left:1852px;top:871px;z-index:46" width="18" height="14" viewBox="0 0 18 14"><g fill="none" stroke="#f2e6ef" stroke-width="1.4"><path d="M5 3 L1.2 7 L5 11"/><path d="M13 3 L16.8 7 L13 11"/><path d="M10.3 1.5 L7.7 12.5"/></g></svg>
<div class="a" style="left:1844px;top:0;width:35px;height:926px;background:linear-gradient(90deg,rgba(0,0,0,0),rgba(0,0,0,0.13));z-index:40"></div>
<div class="a" style="left:1873px;top:45px;width:6px;height:881px;background:linear-gradient(180deg,#a8a8a8 0%,#ababab 90%,#c2c2c2 96%,#c6c6c6 100%);z-index:41"></div>
<div class="a" style="left:0;top:896px;width:1879px;height:30px;background:linear-gradient(180deg,rgba(0,0,0,0),rgba(0,0,0,0.07));z-index:39"></div>
<div class="a" style="left:0px;top:0px;width:1px;height:926px;background:#000;z-index:50"></div>
</body></html>
